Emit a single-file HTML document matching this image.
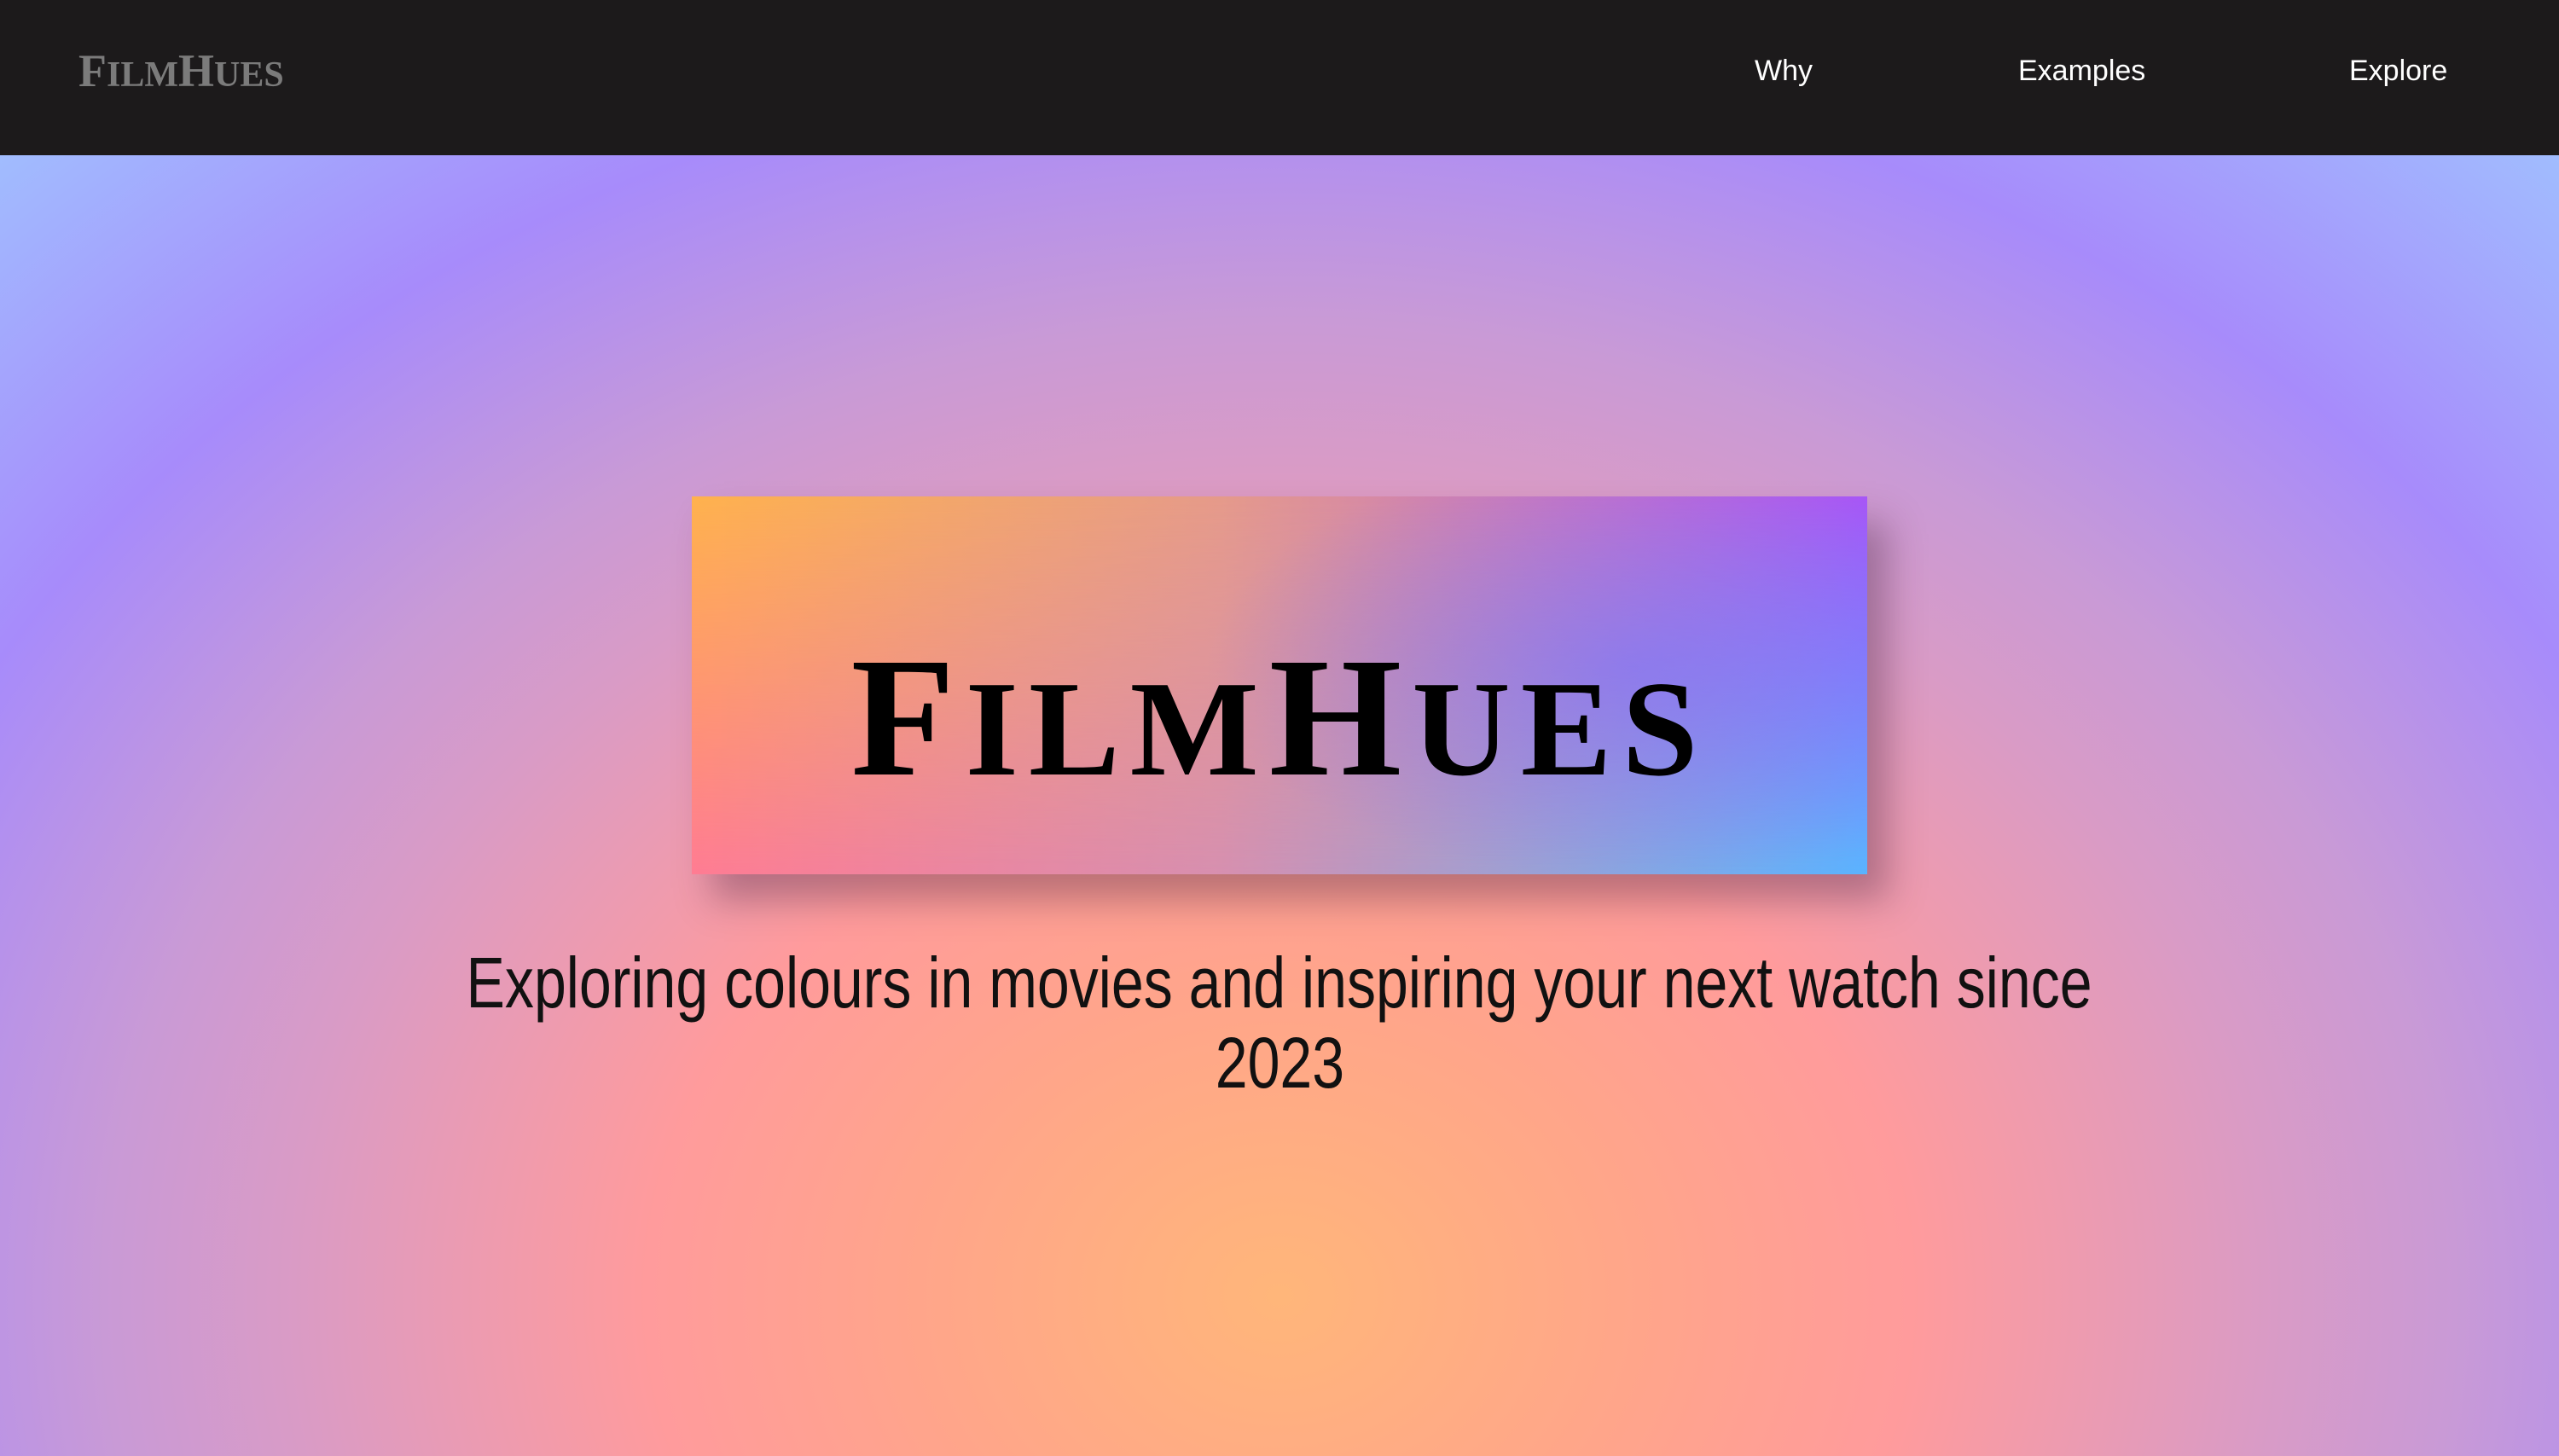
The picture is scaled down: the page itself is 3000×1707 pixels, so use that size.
<!DOCTYPE html>
<html><head><meta charset="utf-8"><style>
*{margin:0;padding:0;box-sizing:border-box}
html,body{width:3000px;height:1707px;overflow:hidden}
body{position:relative;background:radial-gradient(ellipse 2650px 2200px at 50% 89%, #ffb67a 0%, #ffa58a 16%, #ff9b9c 28%, #d99bc6 44%, #c99ad6 52%, #a78bfb 66%, #a0c2ff 85%);font-family:"Liberation Sans",sans-serif}
nav{position:absolute;left:0;top:0;width:3000px;height:182px;background:#1c1a1b}
.logo{position:absolute;left:92px;top:52px;font-family:"Liberation Serif",serif;font-weight:bold;font-size:54px;color:#7b7b7b}
.logo .s{font-size:42px}
.nl{position:absolute;top:64px;color:#fff;font-size:34px}
.box{position:absolute;left:811px;top:582px;width:1378px;height:443px;box-shadow:24px 30px 40px rgba(60,30,60,0.35);background:linear-gradient(to right,#ff7c93,#d790b0 45%,#5ab4ff)}
.ov{position:absolute;inset:0;background:linear-gradient(to right,#ffb24d,#e59a8a 45%,#a855f7);-webkit-mask-image:linear-gradient(to bottom,#000,transparent);mask-image:linear-gradient(to bottom,#000,transparent)}
.mid{position:absolute;inset:0;background:radial-gradient(ellipse 500px 250px at 80% 45%,rgba(120,110,255,0.5),transparent)}
.title{position:absolute;left:0;width:100%;top:160px;text-align:center;font-family:"Liberation Serif",serif;font-weight:bold;font-size:200px;line-height:200px;color:#000;letter-spacing:12px}
.title .s{font-size:160px}
.sub{position:absolute;left:0;width:3000px;text-align:center;font-size:84px;color:#111;line-height:94px}
.sub span{display:inline-block;transform:scaleX(0.81);white-space:nowrap}
</style></head><body>
<nav><div class="logo">F<span class="s">ILM</span>H<span class="s">UES</span></div>
<div class="nl" style="left:2057px">Why</div>
<div class="nl" style="left:2366px">Examples</div>
<div class="nl" style="left:2754px">Explore</div></nav>
<div class="box"><div class="ov"></div><div class="mid"></div><div class="title">F<span class="s">ILM</span>H<span class="s">UES</span></div></div>
<div class="sub" style="top:1105px"><span>Exploring colours in movies and inspiring your next watch since</span></div>
<div class="sub" style="top:1199px"><span>2023</span></div>
</body></html>
